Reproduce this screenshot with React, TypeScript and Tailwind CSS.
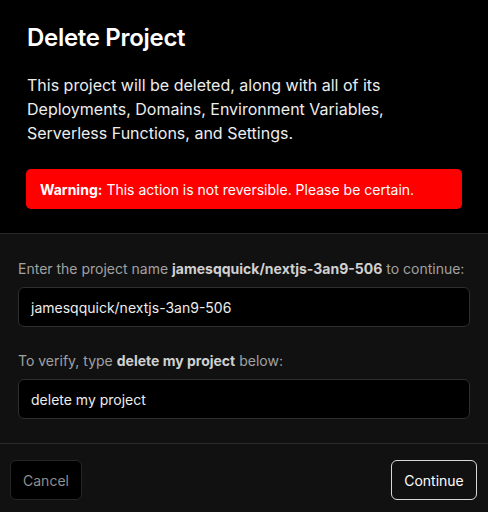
import React from "react";

export default function App() {
  return (
    <div className="w-[488px] h-[512px] bg-[#111111] flex flex-col font-['Inter','Liberation_Sans',sans-serif] overflow-hidden">
      <div className="bg-black pl-[27px] pr-[26px] pt-[22px] h-[234px] border-b border-[#2a2a2a] shrink-0">
        <h1 className="text-[24px] leading-[32px] font-semibold text-white tracking-[-0.3px]">Delete Project</h1>
        <p className="mt-[19px] text-[16px] leading-[24px] text-[#ededed]">
          This project will be deleted, along with all of its Deployments, Domains, Environment Variables, Serverless Functions, and Settings.
        </p>
        <div className="mt-[24px] -ml-px bg-[#ff0000] rounded-[5px] h-[40px] flex items-center px-[14px] text-[14px] text-white">
          <span className="font-bold mr-[4px]">Warning:</span>
          <span>This action is not reversible. Please be certain.</span>
        </div>
      </div>
      <div className="px-[18px] pt-[25px] h-[210px] border-b border-[#2a2a2a] shrink-0">
        <label className="block text-[14px] leading-[20px] text-[#a1a1a1]">
          Enter the project name <span className="font-bold text-[#d0d0d0]">jamesqquick/nextjs-3an9-506</span> to continue:
        </label>
        <div className="mt-[8px] h-[40px] rounded-[6px] border border-[#2e2e2e] bg-black flex items-center px-[12px] text-[14px] text-[#ededed]">
          jamesqquick/nextjs-3an9-506
        </div>
        <label className="block mt-[24px] text-[14px] leading-[20px] text-[#a1a1a1]">
          To verify, type <span className="font-bold text-[#d0d0d0]">delete my project</span> below:
        </label>
        <div className="mt-[8px] h-[40px] rounded-[6px] border border-[#2e2e2e] bg-black flex items-center px-[12px] text-[14px] text-[#ededed]">
          delete my project
        </div>
      </div>
      <div className="flex-1 flex items-center justify-between pl-[10px] pr-[11px] pt-[4px]">
        <button className="h-[40px] w-[72px] rounded-[6px] border border-[#262626] bg-black text-[14px] text-[#8f8f8f]">
          Cancel
        </button>
        <button className="h-[40px] w-[86px] rounded-[6px] border border-[#d9d9d9] bg-[#111111] text-[14px] text-white">
          Continue
        </button>
      </div>
    </div>
  );
}
